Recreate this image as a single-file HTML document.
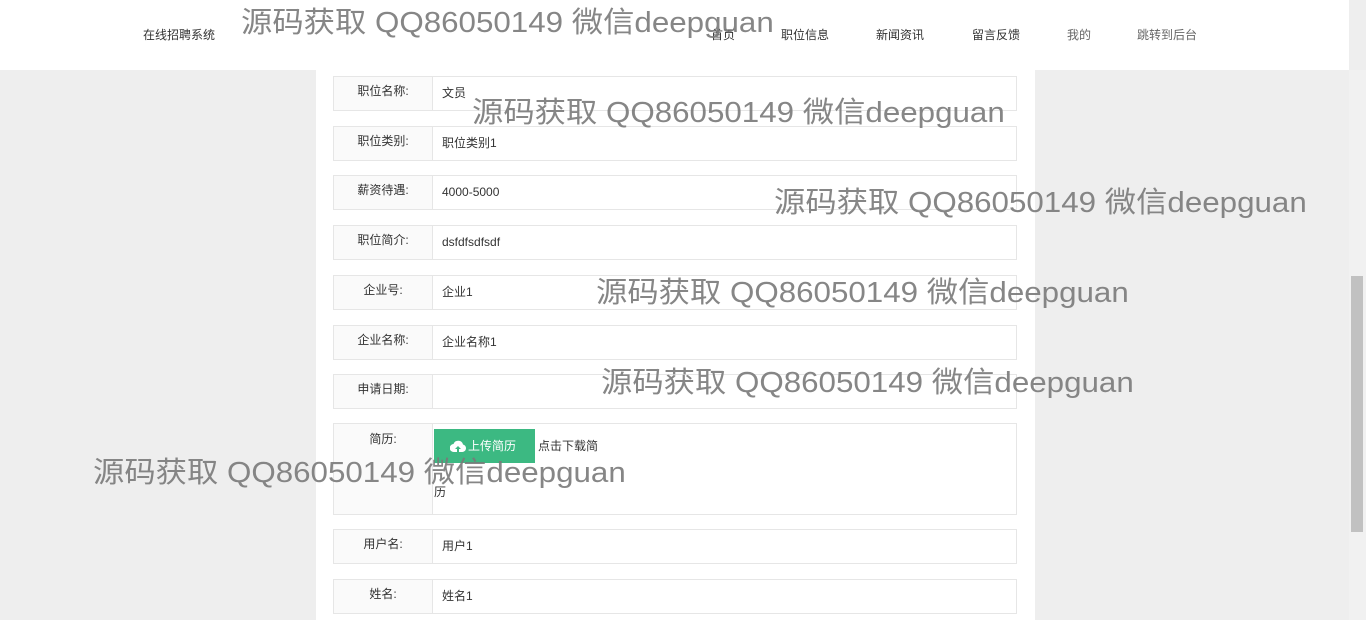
<!DOCTYPE html>
<html><head><meta charset="utf-8"><style>
*{margin:0;padding:0;box-sizing:border-box}
body{width:1366px;height:620px;overflow:hidden;background:#eeeeee;font-family:"Liberation Sans","Noto Sans CJK SC",sans-serif;font-size:12px;color:#333;position:relative}
.hdr{position:absolute;left:0;top:0;width:1349px;height:70px;background:#fff}
.hdr span{position:absolute;top:26px;font-size:12px;color:#333}
.panel{position:absolute;left:316px;top:70px;width:719px;height:550px;background:#fff}
.row{position:absolute;left:333px;width:684px;height:35px;border:1px solid #e6e6e6;background:#fff}
.row .l{position:absolute;left:0;top:0;width:99px;height:100%;background:#fafafa;border-right:1px solid #e6e6e6;text-align:center;line-height:29px;color:#333}
.row .v{position:absolute;left:108px;top:0;line-height:32px;color:#333}
.wm{position:absolute;font-size:29px;color:#7a7a7a;white-space:nowrap;font-family:"Liberation Sans","Noto Sans CJK SC",sans-serif;opacity:.9;transform:scaleX(1.08);transform-origin:0 0}
.sb{position:absolute;left:1349px;top:70px;width:17px;height:550px;background:#f1f1f1}
.th{position:absolute;left:1351px;top:276px;width:12px;height:256px;background:#c1c1c1}
.btn{position:absolute;left:100px;top:5px;width:101px;height:34px;background:#3cb982;color:#fff;line-height:34px;padding-left:34px}
</style></head><body>
<div class="hdr">
<span style="left:143px">在线招聘系统</span>
<span style="left:711px">首页</span>
<span style="left:781px">职位信息</span>
<span style="left:876px">新闻资讯</span>
<span style="left:972px">留言反馈</span>
<span style="left:1067px;color:#666">我的</span>
<span style="left:1137px;color:#666">跳转到后台</span>
</div>
<div class="panel"></div>
<div class="row" style="top:76px"><div class="l">职位名称:</div><div class="v">文员</div></div>
<div class="row" style="top:126px"><div class="l">职位类别:</div><div class="v">职位类别1</div></div>
<div class="row" style="top:175px"><div class="l">薪资待遇:</div><div class="v">4000-5000</div></div>
<div class="row" style="top:225px"><div class="l">职位简介:</div><div class="v">dsfdfsdfsdf</div></div>
<div class="row" style="top:275px"><div class="l">企业号:</div><div class="v">企业1</div></div>
<div class="row" style="top:325px"><div class="l">企业名称:</div><div class="v">企业名称1</div></div>
<div class="row" style="top:374px"><div class="l">申请日期:</div><div class="v"></div></div>
<div class="row" style="top:423px;height:92px"><div class="l" style="line-height:30px">简历:</div>
<div class="btn"><svg style="position:absolute;left:16px;top:11px" width="16" height="13" viewBox="0 0 16 13"><path d="M4 12a4 4 0 0 1-.5-8A5 5 0 0 1 13 4.5a3.8 3.8 0 0 1-.5 7.5z" fill="#fff"/><path d="M8 6l-3 3h2v3h2V9h2z" fill="#3cb982"/></svg>上传简历</div>
<div style="position:absolute;left:204px;top:13px">点击下载简</div>
<div style="position:absolute;left:100px;top:59px">历</div></div>
<div class="row" style="top:529px"><div class="l">用户名:</div><div class="v">用户1</div></div>
<div class="row" style="top:579px"><div class="l">姓名:</div><div class="v">姓名1</div></div>
<div class="sb"></div><div class="th"></div>
<div class="wm" style="left:241px;top:-1px">源码获取 QQ86050149 微信deepguan</div>
<div class="wm" style="left:472px;top:89px">源码获取 QQ86050149 微信deepguan</div>
<div class="wm" style="left:774px;top:179px">源码获取 QQ86050149 微信deepguan</div>
<div class="wm" style="left:596px;top:269px">源码获取 QQ86050149 微信deepguan</div>
<div class="wm" style="left:601px;top:359px">源码获取 QQ86050149 微信deepguan</div>
<div class="wm" style="left:93px;top:449px">源码获取 QQ86050149 微信deepguan</div>
</body></html>
